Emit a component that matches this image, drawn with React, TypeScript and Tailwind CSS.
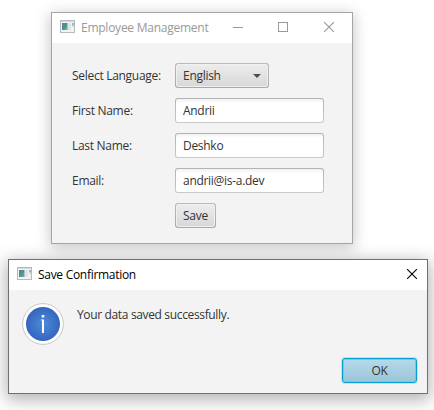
import type { ReactNode } from "react";

function AppIcon() {
  return (
    <svg width="15" height="13" viewBox="0 0 15 13" className="mb-[3px] shrink-0">
      <defs>
        <linearGradient id="pane" x1="0" y1="0" x2="1" y2="1">
          <stop offset="0" stopColor="#5a7fae" />
          <stop offset="0.5" stopColor="#4a9093" />
          <stop offset="1" stopColor="#6fb583" />
        </linearGradient>
      </defs>
      <rect x="0.5" y="0.5" width="14" height="12" fill="#f2f3f4" stroke="#b4babe" />
      <rect x="1" y="1" width="13" height="1" fill="#d3d8db" />
      <rect x="2" y="3" width="5" height="7" fill="url(#pane)" />
      <rect x="7" y="3" width="1" height="7" fill="#a9c6c6" />
      <rect x="8" y="3" width="3" height="7" fill="#e0e2e3" />
      <rect x="12" y="3" width="2" height="2" fill="#93b4cb" />
      <rect x="12" y="5" width="2" height="2" fill="#c3dfcf" />
    </svg>
  );
}

function CloseGlyph() {
  return (
    <svg width="10" height="10" viewBox="0 0 10 10" fill="none" stroke="currentColor">
      <path d="M0 0l10 10M10 0L0 10" strokeWidth="1.1" />
    </svg>
  );
}

function Row({ label, children }: { label: string; children?: ReactNode }) {
  return (
    <div className="flex h-[25px] items-center">
      <span className="w-[103px] shrink-0 whitespace-nowrap">{label}</span>
      {children}
    </div>
  );
}

function Field({ value }: { value: string }) {
  return (
    <div className="h-[25px] w-[149px] rounded-[3px] bg-gradient-to-b from-[#b3b3b3] to-[#c9c9c9] p-px">
      <div className="flex h-full items-center rounded-[2px] bg-white bg-gradient-to-b from-[#f1f1f1] to-white to-[4px] pl-[7px]">
        <span>{value}</span>
      </div>
    </div>
  );
}

export default function App() {
  return (
    <div className="relative h-[410px] w-[434px] overflow-hidden bg-white font-['Open_Sans','Noto_Sans',sans-serif] text-[12px] leading-[16px] tracking-[-0.29px] text-[#333333]">
      <section className="absolute left-[51px] top-[12px] flex h-[232px] w-[302px] flex-col border border-[#a5a5a5] bg-[#f3f3f3] shadow-[0_3px_14px_1px_rgba(0,0,0,0.22)]">
        <header className="flex h-[30px] shrink-0 items-center bg-white pl-2 text-[#999999]">
          <AppIcon />
          <span className="ml-[6px] whitespace-nowrap tracking-[-0.25px]">Employee Management</span>
          <div className="mb-[2px] ml-auto flex items-center pr-[18px]">
            <svg width="10" height="10" viewBox="0 0 10 10">
              <path d="M0 5.5h10" stroke="currentColor" />
            </svg>
            <svg width="10" height="10" viewBox="0 0 10 10" className="ml-[35px] mr-[36px]">
              <rect x=".5" y=".5" width="9" height="9" fill="none" stroke="currentColor" />
            </svg>
            <CloseGlyph />
          </div>
        </header>
        <div className="flex flex-col gap-[10px] px-5 pt-5">
          <Row label="Select Language:">
            <div className="h-[25px] w-[94px] rounded-[3px] bg-gradient-to-b from-[#bababa] to-[#a8a8a8] p-px">
              <div className="flex h-full items-center justify-between rounded-[2px] border border-[#f0f0f0] bg-gradient-to-b from-[#ececec] to-[#d8d8d8] pl-[6px] pr-[6px]">
                <span>English</span>
                <svg width="8" height="4" viewBox="0 0 8 4">
                  <path d="M0 0h8L4 4z" fill="#4d4d4d" />
                </svg>
              </div>
            </div>
          </Row>
          <Row label="First Name:">
            <Field value="Andrii" />
          </Row>
          <Row label="Last Name:">
            <Field value="Deshko" />
          </Row>
          <Row label="Email:">
            <Field value="andrii@is-a.dev" />
          </Row>
          <Row label="">
            <div className="h-[25px] w-[41px] rounded-[3px] bg-gradient-to-b from-[#bababa] to-[#a8a8a8] p-px">
              <div className="flex h-full items-center justify-center rounded-[2px] border border-[#f0f0f0] bg-gradient-to-b from-[#ececec] to-[#d8d8d8]">
                Save
              </div>
            </div>
          </Row>
        </div>
      </section>

      <section className="absolute left-[8px] top-[259px] flex h-[135px] w-[420px] flex-col border border-[#707070] bg-[#f3f3f3] shadow-[0_4px_16px_2px_rgba(0,0,0,0.3)]">
        <header className="flex h-[30px] shrink-0 items-center bg-white pl-2 text-black">
          <AppIcon />
          <span className="ml-[6px] whitespace-nowrap">Save Confirmation</span>
          <div className="mb-[2px] ml-auto pr-[10px]">
            <CloseGlyph />
          </div>
        </header>
        <div className="flex flex-1 items-start pl-[13px] pt-[13px]">
          <svg width="42" height="42" viewBox="0 0 42 42" className="shrink-0">
            <defs>
              <radialGradient id="info">
                <stop offset="0" stopColor="#4b8bdc" />
                <stop offset="1" stopColor="#3665bd" />
              </radialGradient>
            </defs>
            <circle cx="21" cy="21" r="20.4" fill="#fff" stroke="#c8c8c8" />
            <circle cx="21" cy="21" r="17" fill="url(#info)" />
            <rect x="19.7" y="12" width="2.6" height="2.4" fill="#fff" />
            <path d="M19 16.5h3v13.5h-2V17.5h-1z" fill="#fff" />
          </svg>
          <p className="ml-[13px] mt-[4px] whitespace-nowrap tracking-[-0.35px]">Your data saved successfully.</p>
        </div>
        <div className="flex justify-end pb-[10px] pr-[10px]">
          <div className="flex h-[25px] w-[75px] items-center justify-center rounded-[3px] border border-[#039ed3] bg-gradient-to-b from-[#b5daea] to-[#9bc5d8] shadow-[0_0_0_1px_#c3e2ee,inset_0_0_0_1px_#7fc5e0]">
            OK
          </div>
        </div>
      </section>
    </div>
  );
}
